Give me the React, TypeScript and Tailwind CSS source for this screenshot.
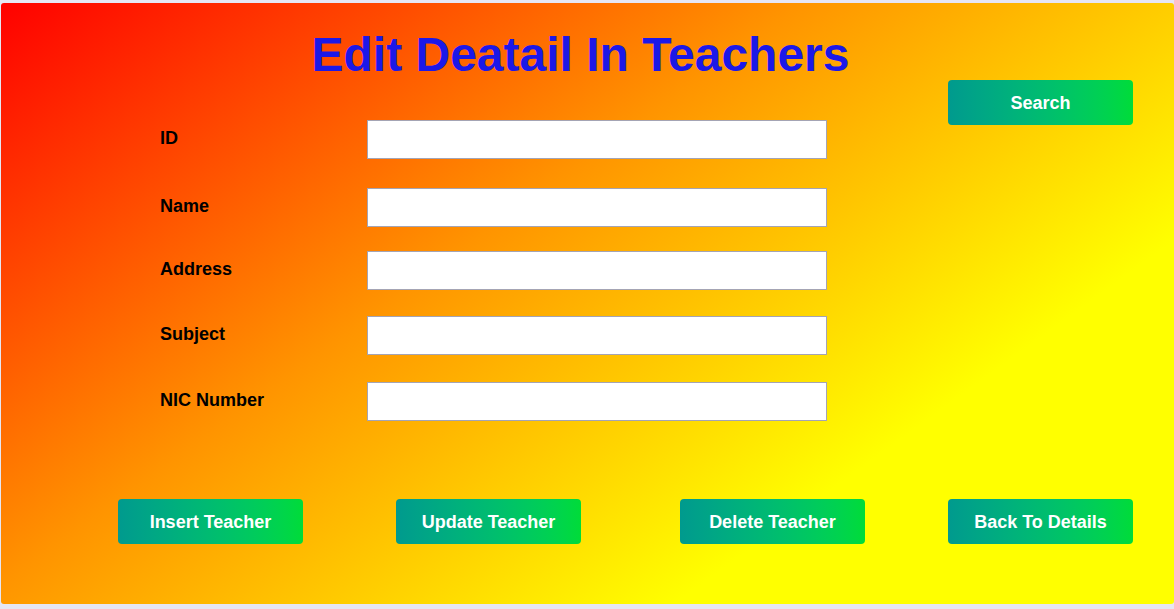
import React from "react";

const font = { fontFamily: '"Liberation Sans", Arial, Helvetica, sans-serif' };

function GButton({ label, className = "" }: { label: string; className?: string }) {
  return (
    <button
      className={`w-[185px] h-[45px] rounded-[4px] bg-gradient-to-r from-[#009a8e] to-[#00dc38] text-white font-bold text-[18px] leading-none shrink-0 ${className}`}
    >
      {label}
    </button>
  );
}

function Row({ label, className = "" }: { label: string; className?: string }) {
  return (
    <div className={`flex items-center ${className}`}>
      <div className="w-[207px] pb-[4px] text-[18px] font-bold text-black leading-none">{label}</div>
      <input
        type="text"
        className="w-[460px] h-[39px] bg-white border border-[#a4a4b4] outline-none"
      />
    </div>
  );
}

export default function App() {
  return (
    <div className="w-[1174px] h-[609px] bg-[#e6e6f4] overflow-hidden" style={font}>
      <div className="ml-[1px] mt-[3px] h-[601px] w-[1173px] rounded-[3px] bg-[linear-gradient(144deg,#ff0000_0%,#ff9400_40%,#ffff00_75%)] flex flex-col">
        <h1 className="mt-[28px] h-[48px] leading-[48px] text-[48px] font-bold text-[#1c18e8] text-center pr-[14px]">
          Edit Deatail In Teachers
        </h1>
        <div className="mt-[1px] flex justify-between pr-[41px]">
          <div className="pl-[159px] pt-[40px] flex flex-col">
            <Row label="ID" />
            <Row label="Name" className="mt-[29px]" />
            <Row label="Address" className="mt-[24px]" />
            <Row label="Subject" className="mt-[26px]" />
            <Row label="NIC Number" className="mt-[27px]" />
          </div>
          <GButton label="Search" />
        </div>
        <div className="mt-[78px] flex pl-[117px]">
          <GButton label="Insert Teacher" />
          <GButton label="Update Teacher" className="ml-[93px]" />
          <GButton label="Delete Teacher" className="ml-[99px]" />
          <GButton label="Back To Details" className="ml-[83px]" />
        </div>
      </div>
    </div>
  );
}
